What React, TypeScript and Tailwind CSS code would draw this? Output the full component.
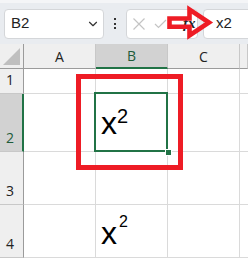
import { ChevronDown } from "lucide-react"

const ui = { fontFamily: '"Open Sans", "Noto Sans", sans-serif' }
const arial = { fontFamily: '"Liberation Sans", Arial, sans-serif' }

const cols = ["A", "B", "C", ""]
const rows = [
  { n: "1", h: "h-[25px]" },
  { n: "2", h: "h-[58px]" },
  { n: "3", h: "h-[53px]" },
  { n: "4", h: "h-[53px]" },
]

function Squared({ big, small, top, smallTop }: { big: string; small: string; top: string; smallTop: string }) {
  return (
    <div className={"flex items-start pl-[5px] text-black " + top} style={arial}>
      <span className="text-[32px] leading-none">x</span>
      <span className={"leading-none " + big + " " + smallTop}>{small}</span>
    </div>
  )
}

export default function App() {
  return (
    <div className="relative h-[259px] w-[248px] overflow-hidden bg-white" style={ui}>
      {/* formula bar */}
      <div className="flex h-[44px] items-center overflow-hidden border-t-[3px] border-[#f4f5f7] bg-[#e9ecf0] pl-[4px]">
        <div className="flex h-[30px] w-[100px] shrink-0 items-center justify-between rounded-[4px] border border-[#d4d6d9] bg-white pl-[6px] pr-[3px]">
          <span className="text-[15px] text-[#222]" style={arial}>B2</span>
          <ChevronDown className="size-[14px] text-[#333]" strokeWidth={2} />
        </div>
        <div className="flex w-[22px] shrink-0 flex-col items-center gap-[2.5px]">
          <span className="size-[2px] bg-[#333]" />
          <span className="size-[2px] bg-[#333]" />
          <span className="size-[2px] bg-[#333]" />
        </div>
        <div className="flex h-[30px] w-[72px] shrink-0 items-center rounded-[4px] border border-[#d4d6d9] bg-white pl-[5px]">
          <svg width="14" height="14" viewBox="0 0 14 14" className="mr-[8px]">
            <path d="M1.5 1.5 L12.5 12.5 M12.5 1.5 L1.5 12.5" stroke="#c4c4c4" strokeWidth="1.2" fill="none" />
          </svg>
          <svg width="13" height="10" viewBox="0 0 13 10" className="mr-[16px]">
            <path d="M1 5 L4.5 8.5 L12 1" stroke="#c4c4c4" strokeWidth="1.2" fill="none" />
          </svg>
          <span className="text-[15px] font-bold italic text-[#222]" style={{ fontFamily: '"Liberation Serif", serif' }}>fx</span>
        </div>
        <div className="ml-[5px] flex h-[30px] w-[70px] shrink-0 items-center rounded-[4px] border border-[#d4d6d9] bg-white pl-[12px]">
          <span className="text-[15px] text-[#222]" style={arial}>x2</span>
        </div>
      </div>

      {/* sheet */}
      <div className="relative">
        <div className="grid grid-cols-[24px_72px_72px_72px_1fr] text-[14px] text-[#222]">
          <div className="relative h-[25px] border-r border-b border-[#9b9b9b] bg-[#efefef]">
            <svg width="18" height="18" viewBox="0 0 18 18" className="absolute left-[3px] top-[4px]">
              <path d="M17 0 L17 17 L0 17 Z" fill="#bfbfbf" />
            </svg>
          </div>
          {cols.map((c) => (
            <div
              key={c || "d"}
              className={
                "flex h-[25px] items-center justify-center border-r " +
                (c === "B"
                  ? "border-r-[#c8c8c8] border-b-2 border-b-[#217346] bg-[#d2d2d2] text-[#1e5c3a]"
                  : "border-r-[#c8c8c8] border-b border-b-[#9b9b9b] bg-[#efefef]")
              }
            >
              {c}
            </div>
          ))}

          {rows.map((r) => (
            <div key={r.n} className="contents">
              <div
                className={
                  "flex items-end border-b border-[#c8c8c8] pb-[3px] pl-[6px] " +
                  r.h +
                  (r.n === "2"
                    ? " border-r-2 border-r-[#217346] bg-[#d2d2d2] text-[#1e5c3a]"
                    : " border-r border-r-[#9b9b9b] bg-[#efefef]")
                }
              >
                {r.n}
              </div>
              <div className={"border-r border-b border-[#dadada] " + r.h} />
              <div className={"border-r border-b border-[#dadada] " + r.h}>
                {r.n === "2" && <Squared big="text-[20px]" small="2" top="pt-[13px]" smallTop="mt-[-1px]" />}
                {r.n === "4" && <Squared big="text-[16px]" small="2" top="pt-[12px]" smallTop="mt-[-3px] ml-[2px]" />}
              </div>
              <div className={"border-r border-b border-[#dadada] " + r.h} />
              <div className={"border-b border-[#dadada] " + r.h} />
            </div>
          ))}
        </div>

        {/* active cell */}
        <div className="absolute left-[94px] top-[48px] h-[60px] w-[74px] border-2 border-[#217346]" />
        <div className="absolute left-[165px] top-[105px] size-[7px] border border-white bg-[#217346]" />

        {/* annotation */}
        <div className="absolute left-[76px] top-[30px] h-[96px] w-[107px] border-[5px] border-[#ee1c25]" />
      </div>

      <svg width="248" height="44" viewBox="0 0 248 44" className="absolute left-0 top-0">
        <path
          d="M169.5 18.5 H189.5 V9.5 L209 22.5 L189.5 35.5 V26.8 H169.5 Z"
          fill="none"
          stroke="#ee1c25"
          strokeWidth="4.6"
          strokeLinejoin="miter"
          strokeMiterlimit="6"
        />
      </svg>
    </div>
  )
}
